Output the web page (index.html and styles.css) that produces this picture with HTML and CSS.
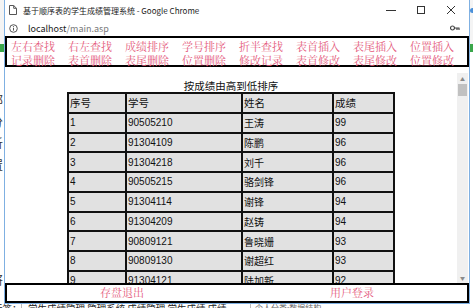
FILE: index.html
```html
<!DOCTYPE html>
<html lang="zh-CN">
<head>
  <meta charset="utf-8">
  <title>基于顺序表的学生成绩管理系统</title>
  <link rel="stylesheet" href="styles.css">
</head>
<body>
  <!-- blog page behind the popup -->
  <div class="blog">
    <div class="blog-top"><span class="blog-dot"></span></div>
    <div class="blog-green"></div>
    <div class="blog-side">
      <p>部</p>
      <p>分</p>
      <p>析</p>
      <p>置</p>
      <p class="far">将</p>
    </div>
    <div class="blog-tags">
      <span class="tag-label">标签：</span>
      <span class="tag-list">学生成绩管理 管理系统 成绩管理 学生成绩 成绩</span>
      <span class="tag-cat">个人分类:数据结构</span>
    </div>
  </div>

  <div class="chrome">
    <div class="title-bar">
      <svg class="doc-icon" width="8" height="10" viewBox="0 0 8 10">
        <path d="M.5 .5h4.2l2.8 2.8v6.2h-7z M4.7 .5v2.8h2.8" fill="none" stroke="#555" stroke-width="1"/>
      </svg>
      <span class="title-text">基于顺序表的学生成绩管理系统 - Google Chrome</span>
      <div class="win-btns">
        <span class="win-btn">
          <svg width="10" height="10" viewBox="0 0 10 10"><path d="M0 5.5h10" stroke="#333" stroke-width="1"/></svg>
        </span>
        <span class="win-btn">
          <svg width="10" height="10" viewBox="0 0 10 10"><rect x="1.5" y="1.5" width="7" height="7" fill="none" stroke="#333" stroke-width="1"/></svg>
        </span>
        <span class="win-btn">
          <svg width="10" height="10" viewBox="0 0 10 10"><path d="M1 1l8 8M9 1l-8 8" stroke="#333" stroke-width="1"/></svg>
        </span>
      </div>
    </div>

    <div class="addr-bar">
      <svg class="info-icon" width="9" height="9" viewBox="0 0 9 9">
        <circle cx="4.5" cy="4.5" r="3.8" fill="none" stroke="#555" stroke-width="1"/>
        <path d="M4.5 4v2.6" stroke="#555" stroke-width="1"/>
        <circle cx="4.5" cy="2.7" r=".6" fill="#555"/>
      </svg>
      <span class="url"><span class="host">localhost</span>/main.asp</span>
      <svg class="key-icon" width="10" height="6" viewBox="0 0 10 6">
        <circle cx="2.5" cy="3" r="2" fill="none" stroke="#444" stroke-width="1.2"/>
        <path d="M4.5 3h5M7 3v2M9 3v2" stroke="#444" stroke-width="1.2"/>
      </svg>
    </div>

    <div class="page">
      <div class="menu">
        <a href="#">左右查找</a>
        <a href="#">右左查找</a>
        <a href="#">成绩排序</a>
        <a href="#">学号排序</a>
        <a href="#">折半查找</a>
        <a href="#">表首插入</a>
        <a href="#">表尾插入</a>
        <a href="#">位置插入</a>
        <a href="#">记录删除</a>
        <a href="#">表首删除</a>
        <a href="#">表尾删除</a>
        <a href="#">位置删除</a>
        <a href="#">修改记录</a>
        <a href="#">表首修改</a>
        <a href="#">表尾修改</a>
        <a href="#">位置修改</a>
      </div>

      <div class="main">
        <div class="view">
          <p class="caption">按成绩由高到低排序</p>
          <table class="score">
            <tr class="head"><td>序号</td><td>学号</td><td>姓名</td><td>成绩</td></tr>
            <tr><td>1</td><td>90505210</td><td>王涛</td><td>99</td></tr>
            <tr><td>2</td><td>91304109</td><td>陈鹏</td><td>96</td></tr>
            <tr><td>3</td><td>91304218</td><td>刘千</td><td>96</td></tr>
            <tr><td>4</td><td>90505215</td><td>骆剑锋</td><td>96</td></tr>
            <tr><td>5</td><td>91304114</td><td>谢锋</td><td>94</td></tr>
            <tr><td>6</td><td>91304209</td><td>赵铸</td><td>94</td></tr>
            <tr><td>7</td><td>90809121</td><td>鲁晓姗</td><td>93</td></tr>
            <tr><td>8</td><td>90809130</td><td>谢超红</td><td>93</td></tr>
            <tr><td>9</td><td>91304121</td><td>陆加新</td><td>92</td></tr>
            <tr><td>10</td><td>91304101</td><td>李明</td><td>91</td></tr>
          </table>
        </div>
        <div class="scrollbar">
          <span class="sb-arrow">▲</span>
          <span class="sb-thumb"></span>
          <span class="sb-track"></span>
          <span class="sb-arrow">▼</span>
        </div>
      </div>

      <div class="footer">
        <a href="#">存盘退出</a>
        <a href="#">用户登录</a>
      </div>
    </div>
  </div>
</body>
</html>
```

FILE: styles.css
```css
html, body {
  margin: 0;
  padding: 0;
}
body {
  position: relative;
  width: 473px;
  height: 308px;
  overflow: hidden;
  background: #fff;
  font-family: "Noto Sans CJK SC", "Liberation Sans", sans-serif;
}

/* the blog page lying under the popup window */
.blog {
  display: flex;
  flex-direction: column;
  height: 308px;
}
.blog-top {
  height: 44px;
  display: flex;
  justify-content: flex-end;
  align-items: flex-start;
  background: #f4f4f4;
}
.blog-dot {
  width: 5px;
  height: 5px;
  margin: 8px -2px 0 0;
  border-radius: 50%;
  background: #4a90d9;
}
.blog-green {
  height: 8px;
  background: #3aa64a;
}
.blog-side {
  flex: 1;
  padding-top: 37px;
  margin-left: -9px;
  font-size: 12px;
  color: #333;
}
.blog-side p {
  margin: 0;
  line-height: 21.5px;
}
.blog-side .far {
  margin-top: 94px;
}
.blog-tags {
  height: 6px;
  display: flex;
  font-size: 9.5px;
  line-height: 12px;
  color: #222;
  white-space: nowrap;
}
.tag-label {
  width: 22px;
  margin-left: -7px;
  padding-right: 6px;
  border-right: 1px solid #bbb;
}
.tag-list {
  width: 222px;
  padding-left: 6px;
  border-right: 1px solid #bbb;
}
.tag-cat {
  padding-left: 4px;
  font-size: 8px;
  color: #666;
}

/* popup chrome window */
.chrome {
  position: absolute;
  left: 4px;
  top: -1px;
  width: 464px;
  height: 303px;
  border: 1px solid #7fb0e2;
  background: #fff;
  display: flex;
  flex-direction: column;
}
.title-bar {
  height: 20px;
  display: flex;
  align-items: center;
  padding-left: 4px;
}
.doc-icon {
  margin-right: 6px;
}
.title-text {
  flex: 1;
  font-size: 8px;
  color: #222;
  white-space: nowrap;
}
.win-btns {
  display: flex;
  margin-right: 3px;
}
.win-btn {
  width: 30px;
  height: 20px;
  display: flex;
  align-items: center;
  justify-content: center;
}
.addr-bar {
  height: 16px;
  display: flex;
  align-items: center;
  padding: 0 9px 0 4px;
}
.info-icon {
  margin-right: 10px;
}
.url {
  flex: 1;
  font-size: 9px;
  color: #7a7a7a;
}
.host {
  color: #222;
}

.page {
  height: 267px;
  display: flex;
  flex-direction: column;
}
.menu {
  height: 31px;
  box-sizing: border-box;
  border: 2px solid #000;
  display: grid;
  grid-template-columns: repeat(8, 1fr);
  padding: 1px 0 0 4px;
  font-family: "Noto Serif CJK SC", "Noto Sans CJK SC", serif;
  font-size: 11px;
  line-height: 14px;
}
.menu a,
.footer a {
  color: #e4587a;
  text-decoration: none;
  white-space: nowrap;
}

.main {
  height: 216px;
  display: flex;
}
.view {
  flex: 1;
  overflow: hidden;
  padding-top: 13px;
}
.caption {
  margin: 0;
  text-align: center;
  font-size: 10.5px;
  line-height: 12px;
  color: #111;
}
.score {
  margin: 0 auto;
  width: 328px;
  table-layout: fixed;
  border-collapse: separate;
  border-spacing: 0;
  border-top: 2px solid #111;
  border-left: 2px solid #111;
  font-family: "Liberation Sans", "Noto Sans CJK SC", sans-serif;
  font-size: 10px;
  color: #111;
}
.score td {
  box-sizing: border-box;
  height: 19.75px;
  padding: 0 0 0 1px;
  border-right: 2px solid #111;
  border-bottom: 2px solid #111;
  background: #e1e1e1;
  white-space: nowrap;
}
.score .head td {
  font-size: 10.5px;
}
.score td:nth-child(1) { width: 58px; }
.score td:nth-child(2) { width: 116px; }
.score td:nth-child(3) { width: 91px; }
.score td:nth-child(4) { width: 61px; }

.scrollbar {
  width: 11px;
  margin: 6px 1px 0 0;
  display: flex;
  flex-direction: column;
  background: #f0f0f0;
}
.sb-arrow {
  height: 11px;
  font-size: 5px;
  line-height: 11px;
  text-align: center;
  color: #8a8a8a;
}
.sb-thumb {
  height: 12px;
  margin: 0 1px;
  background: #c1c1c1;
}
.sb-track {
  flex: 1;
}

.footer {
  height: 20px;
  box-sizing: border-box;
  border: 2px solid #000;
  display: grid;
  grid-template-columns: 1fr 1fr;
  text-align: center;
  font-family: "Noto Serif CJK SC", "Noto Sans CJK SC", serif;
  font-size: 11px;
  line-height: 15px;
}
```
